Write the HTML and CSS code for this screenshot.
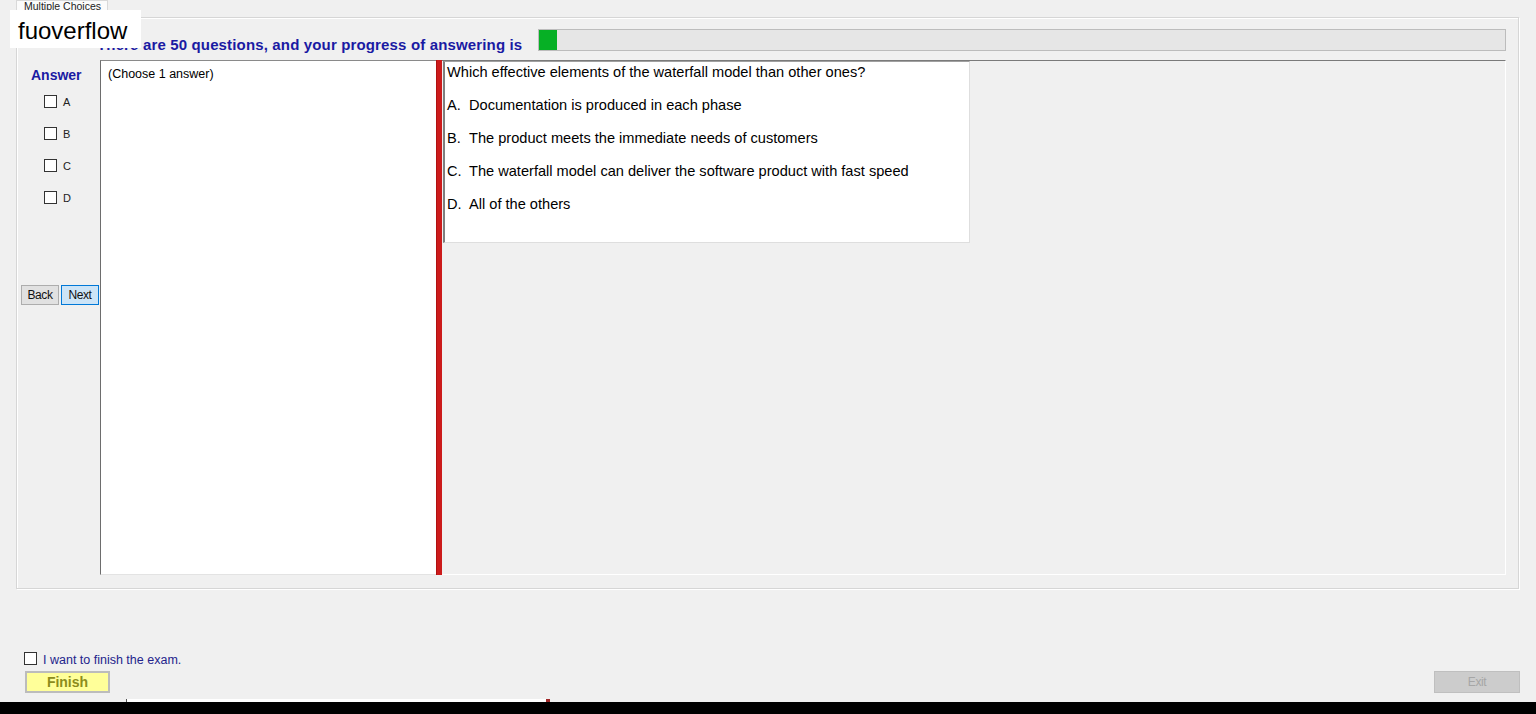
FILE: index.html
```html
<!DOCTYPE html>
<html lang="en">

<head>
    <meta charset="UTF-8">
    <title>Multiple Choices</title>
    <link rel="stylesheet" href="styles.css">
</head>

<body>
    <div class="brand">fuoverflow</div>

    <div class="tabs">
        <div class="tab">Multiple Choices</div>
    </div>

    <div class="group">
        <div class="header">
            <h1 class="progress-title">There are 50 questions, and your progress of answering is</h1>
            <div class="progress">
                <div class="progress-fill" style="width: 18px;"></div>
            </div>
        </div>

        <div class="body">
            <div class="answers">
                <div class="answer-title">Answer</div>
                <label class="choice"><input type="checkbox" class="box"><span>A</span></label>
                <label class="choice"><input type="checkbox" class="box"><span>B</span></label>
                <label class="choice"><input type="checkbox" class="box"><span>C</span></label>
                <label class="choice"><input type="checkbox" class="box"><span>D</span></label>

                <div class="nav">
                    <button type="button" class="btn">Back</button>
                    <button type="button" class="btn btn-focus">Next</button>
                </div>
            </div>

            <div class="answer-box">(Choose 1 answer)</div>
            <div class="splitter"></div>

            <div class="question-area">
                <div class="question">
                    <p>Which effective elements of the waterfall model than other ones?</p>
                    <p><span class="letter">A.</span>Documentation is produced in each phase</p>
                    <p><span class="letter">B.</span>The product meets the immediate needs of customers</p>
                    <p><span class="letter">C.</span>The waterfall model can deliver the software product with fast speed</p>
                    <p><span class="letter">D.</span>All of the others</p>
                </div>
            </div>
        </div>
    </div>

    <div class="footer">
        <label class="finish-check"><input type="checkbox" class="box"><span>I want to finish the exam.</span></label>
        <div class="footer-buttons">
            <button type="button" class="finish">Finish</button>
            <button type="button" class="exit" disabled>Exit</button>
        </div>
    </div>

    <div class="strip"></div>
    <div class="taskbar"></div>
</body>

</html>
```

FILE: styles.css
```css
* {
    box-sizing: border-box;
}

body {
    margin: 0;
    height: 714px;
    overflow: hidden;
    background-color: #f0f0f0;
    font-family: "Liberation Sans", Arial, sans-serif;
    color: #000;
    position: relative;
}

.brand {
    position: absolute;
    left: 10px;
    top: 10px;
    width: 131px;
    height: 38px;
    padding-left: 8px;
    background-color: #fff;
    font-size: 24px;
    line-height: 42px;
    z-index: 2;
}

/* tab strip */
.tabs {
    height: 17px;
    padding-left: 16px;
}

.tab {
    width: 92px;
    height: 17px;
    background-color: #fbfbfb;
    border: 1px solid #d9d9d9;
    border-bottom: none;
    font-size: 10.5px;
    line-height: 11px;
    padding-left: 7px;
    color: #222;
    overflow: hidden;
}

/* main group */
.group {
    margin-left: 16px;
    width: 1503px;
    height: 572px;
    border: 1px solid #d6d6d6;
    box-shadow: inset 1px 1px 0 #fff, 1px 1px 0 #fff;
}

.header {
    display: flex;
    align-items: flex-end;
    height: 22px;
    margin-top: 11px;
    padding-left: 80px;
}

.progress-title {
    margin: 0 0 -3px;
    font-size: 15px;
    font-weight: bold;
    letter-spacing: 0.15px;
    color: #1a1aa3;
    line-height: 18px;
}

.progress {
    width: 968px;
    height: 22px;
    margin-left: auto;
    margin-right: 12px;
    background-color: #e6e6e6;
    border: 1px solid #bcbcbc;
}

.progress-fill {
    height: 100%;
    background-color: #06b025;
}

.body {
    display: flex;
    height: 515px;
    margin-top: 9px;
}

/* left answer column */
.answers {
    width: 83px;
    padding: 0 0 0 4px;
}

.answer-title {
    font-size: 14px;
    font-weight: bold;
    color: #1a1aa3;
    line-height: 17px;
    margin: 7px 0 11px 10px;
}

.choice {
    display: flex;
    align-items: center;
    height: 13px;
    margin: 0 0 19px 23px;
    font-size: 11px;
    color: #222;
}

.box {
    appearance: none;
    -webkit-appearance: none;
    width: 13px;
    height: 13px;
    margin: 0 6px 0 0;
    background-color: #fff;
    border: 1px solid #333;
    flex-shrink: 0;
}

.nav {
    display: flex;
    gap: 2px;
    margin-top: 81px;
}

.btn {
    width: 38px;
    height: 20px;
    padding: 0;
    font-family: "Liberation Sans", Arial, sans-serif;
    font-size: 12px;
    letter-spacing: -0.4px;
    color: #111;
    background-color: #e1e1e1;
    border: 1px solid #adadad;
}

.btn-focus {
    background-color: #cce4f7;
    border-color: #0078d7;
}

/* answer text box */
.answer-box {
    width: 336px;
    background-color: #fff;
    border-top: 1px solid #8a8a8a;
    border-left: 1px solid #6d6d6d;
    border-bottom: 1px solid #e3e3e3;
    font-size: 12.5px;
    line-height: 14px;
    padding: 6px 7px;
}

.splitter {
    width: 6px;
    background-color: #cc1b1b;
    border-left: 1px solid #b01010;
}

/* question */
.question-area {
    width: 1064px;
    border-top: 1px solid #7a7a7a;
    border-right: 1px solid #fff;
    border-bottom: 1px solid #fff;
    padding-left: 1px;
}

.question {
    width: 527px;
    height: 182px;
    background-color: #fff;
    border-top: 1px solid #a0a0a0;
    border-left: 2px solid #7f7f7f;
    border-right: 1px solid #dedede;
    border-bottom: 1px solid #dedede;
    padding: 2px 0 0 2px;
    font-size: 14.6px;
}

.question p {
    margin: 0 0 16px;
    line-height: 17px;
    white-space: nowrap;
}

.letter {
    display: inline-block;
    width: 22px;
}

/* footer */
.footer {
    height: 110px;
    padding-top: 63px;
}

.finish-check {
    display: flex;
    align-items: center;
    height: 13px;
    margin-left: 24px;
    font-size: 12.5px;
    color: #24248c;
}

.finish-check span {
    margin-top: 3px;
}

.footer-buttons {
    display: flex;
    justify-content: space-between;
    margin-top: 6px;
    padding: 0 16px 0 25px;
}

.finish {
    width: 85px;
    height: 22px;
    padding: 0;
    background-color: #ffff99;
    border: 2px solid #bcbcbc;
    font-family: "Liberation Sans", Arial, sans-serif;
    font-size: 14px;
    font-weight: bold;
    color: #8c8c1c;
}

.exit {
    width: 86px;
    height: 22px;
    padding: 0;
    background-color: #cccccc;
    border: 1px solid #bfbfbf;
    font-family: "Liberation Sans", Arial, sans-serif;
    font-size: 12px;
    letter-spacing: -0.4px;
    color: #a6a6a6;
}

.strip {
    margin-left: 126px;
    width: 424px;
    height: 3px;
    background-color: #fff;
    border-left: 1px solid #555;
    border-right: 4px solid #a02828;
}

.taskbar {
    height: 12px;
    background-color: #000;
}
```
